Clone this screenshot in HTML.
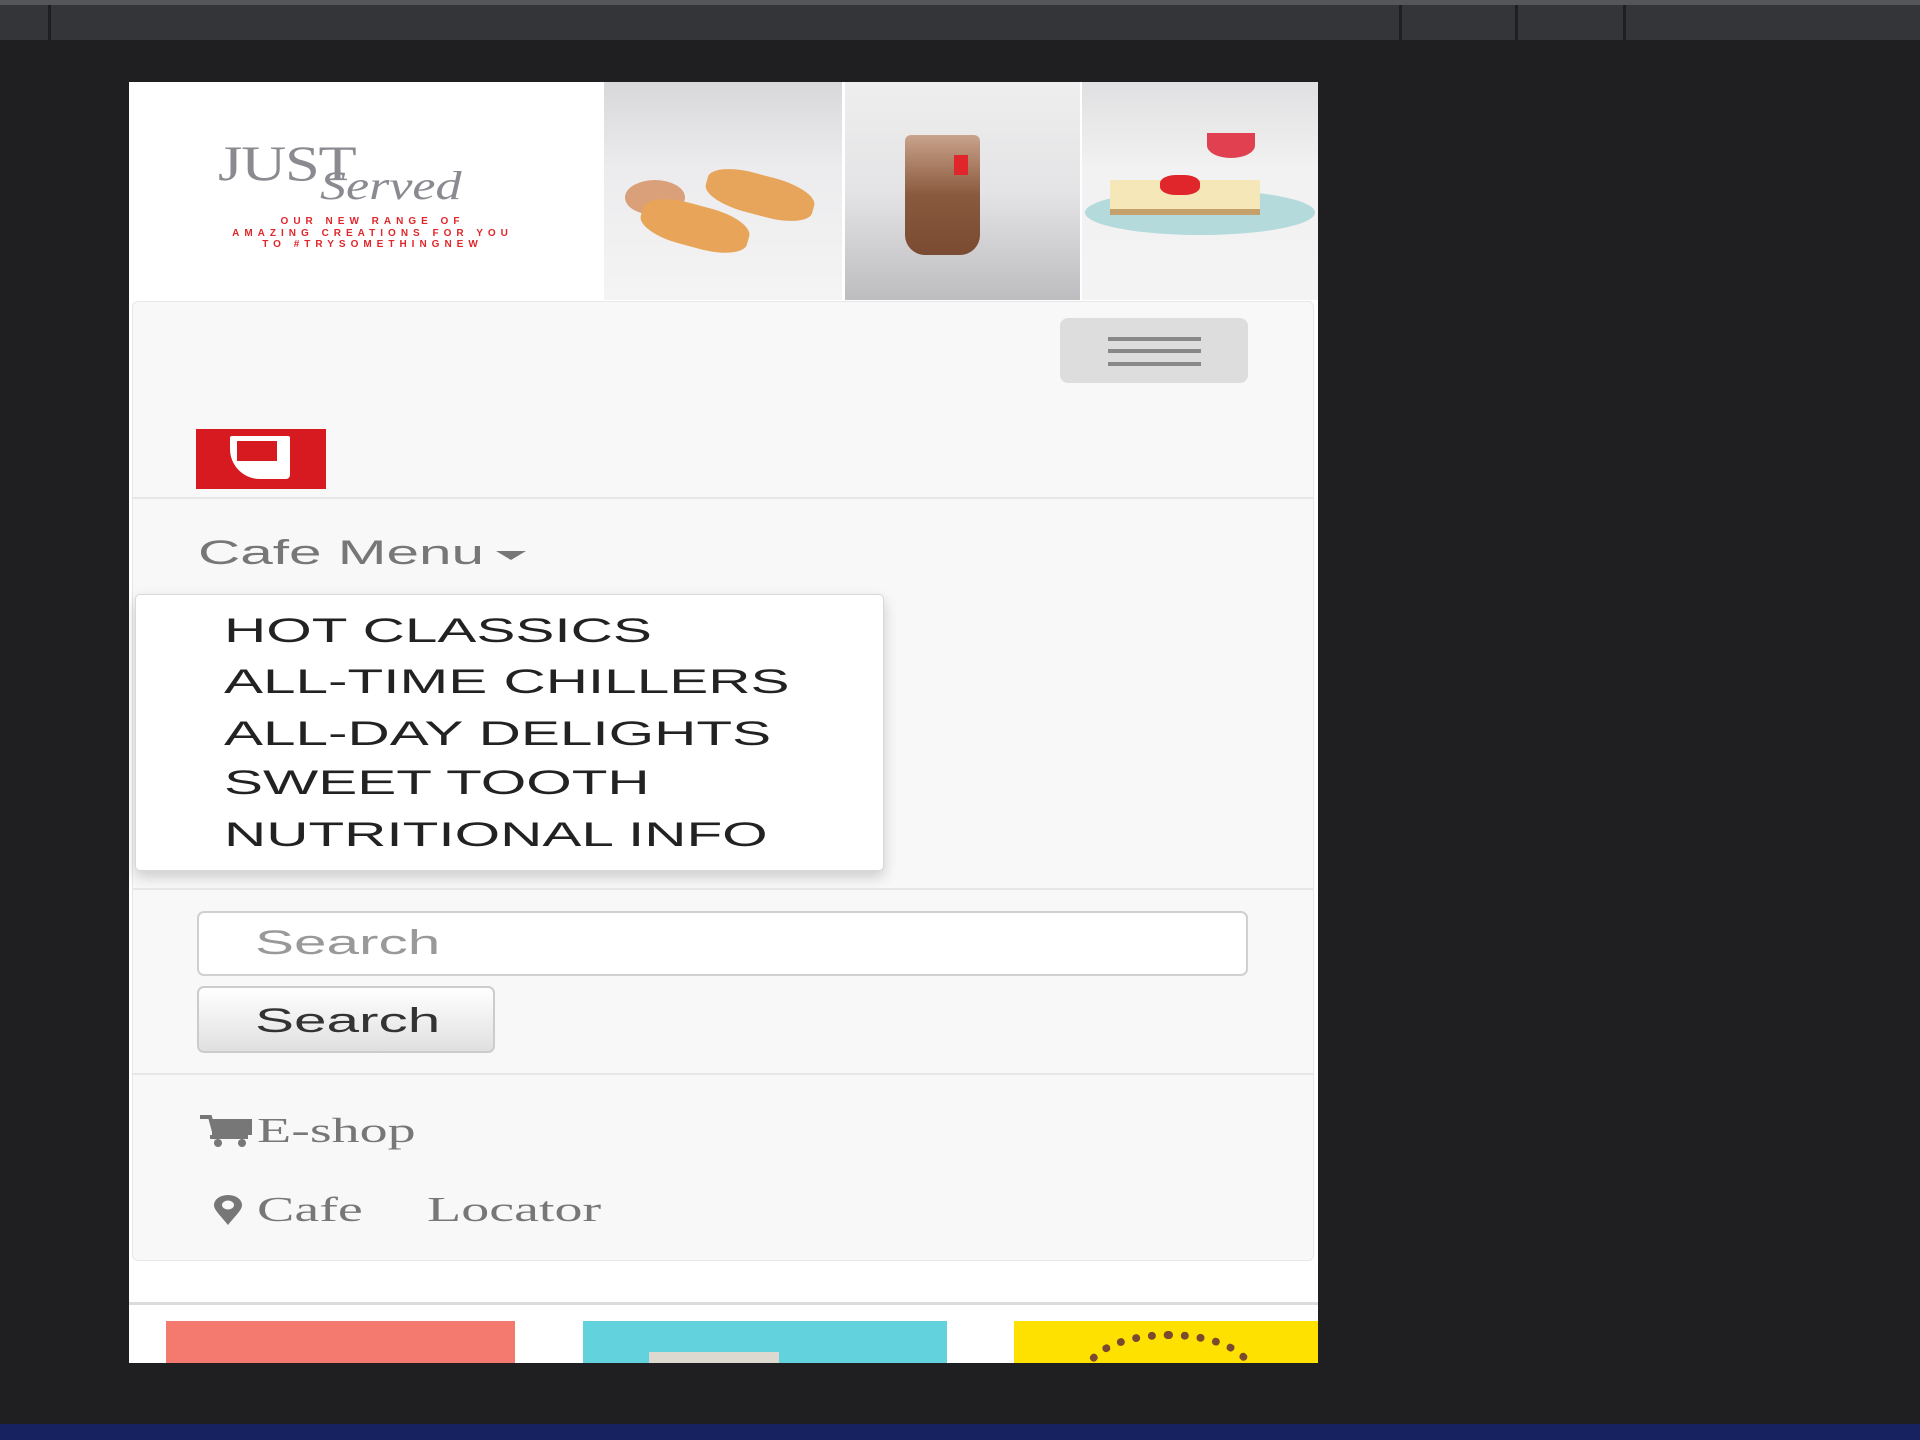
<!DOCTYPE html>
<html><head><meta charset="utf-8"><style>
*{margin:0;padding:0;box-sizing:border-box}
body{width:1920px;height:1440px;background:#1f1f21;position:relative;overflow:hidden;font-family:"Liberation Sans",Arial,sans-serif}
.a{position:absolute}
.sx{transform:scaleX(1.72);transform-origin:left bottom;white-space:nowrap;line-height:1}
.serif{font-family:"Liberation Serif",serif;transform:scaleX(1.6);transform-origin:left bottom;white-space:nowrap;line-height:1}
</style></head><body>
<div class="a" style="left:0;top:0;width:1920px;height:40px;background:#343538"></div>
<div class="a" style="left:0;top:0;width:1920px;height:5px;background:#55565a"></div>
<div class="a" style="left:48px;top:5px;width:3px;height:35px;background:#1f1f21"></div>
<div class="a" style="left:1399px;top:5px;width:3px;height:35px;background:#1f1f21"></div>
<div class="a" style="left:1515px;top:5px;width:3px;height:35px;background:#1f1f21"></div>
<div class="a" style="left:1623px;top:5px;width:3px;height:35px;background:#1f1f21"></div>
<div class="a" style="left:0;top:1424px;width:1920px;height:16px;background:#172260"></div>

<div class="a" style="left:129px;top:82px;width:1189px;height:1281px;background:#fff;overflow:hidden">
<div class="a" style="left:37px;top:1239px;width:349px;height:42px;background:#f47a70"></div>
<div class="a" style="left:454px;top:1239px;width:364px;height:42px;background:#62d3dc"></div>
<div class="a" style="left:520px;top:1270px;width:130px;height:11px;background:#ddd8d0"></div>
<div class="a" style="left:885px;top:1239px;width:304px;height:42px;background:#ffe100;overflow:hidden">
<div class="a" style="left:70px;top:10px;width:170px;height:80px;border-radius:50%;border:8px dotted #7a4a30"></div>
</div>
</div>

<div class="a" style="left:218px;top:134px;font-family:'Liberation Serif',serif;font-size:50px;color:#8a8a90;letter-spacing:-1px;transform:scaleX(1.25);transform-origin:left top">JUST</div>
<div class="a" style="left:320px;top:162px;font-family:'Liberation Serif',serif;font-style:italic;font-size:40px;color:#8a8a90;transform:scaleX(1.3);transform-origin:left top">Served</div>
<div class="a" style="left:180px;top:216px;width:385px;text-align:center;color:#e0262b;font-weight:bold;font-size:10px;letter-spacing:5px;line-height:11.5px">OUR NEW RANGE OF<br>AMAZING CREATIONS FOR YOU<br>TO #TRYSOMETHINGNEW</div>
<div class="a" style="left:604px;top:82px;width:238px;height:218px;background:linear-gradient(#d8d8da,#ececee 40%,#f4f4f4)"></div>
<div class="a" style="left:625px;top:180px;width:60px;height:35px;border-radius:50%;background:#d9a07a"></div>
<div class="a" style="left:705px;top:175px;width:110px;height:40px;border-radius:40%;background:#e7a55c;transform:rotate(15deg)"></div>
<div class="a" style="left:640px;top:205px;width:110px;height:42px;border-radius:40%;background:#e8a55a;transform:rotate(15deg)"></div>
<div class="a" style="left:845px;top:82px;width:235px;height:218px;background:linear-gradient(#eeeeee,#e4e4e6 50%,#bdbdc0)"></div>
<div class="a" style="left:905px;top:135px;width:75px;height:120px;border-radius:6px 6px 20px 20px;background:linear-gradient(#c9a38b,#8a5a3e 50%,#7a4a32)"></div>
<div class="a" style="left:954px;top:155px;width:14px;height:20px;background:#e0262b"></div>
<div class="a" style="left:1082px;top:82px;width:236px;height:218px;background:linear-gradient(#e0e0e2,#f2f2f2 40%,#f3f3f3)"></div>
<div class="a" style="left:1085px;top:190px;width:230px;height:45px;border-radius:50%;background:#b4dadb"></div>
<div class="a" style="left:1110px;top:180px;width:150px;height:35px;background:#f6e7b8;border-bottom:6px solid #c4a06a"></div>
<div class="a" style="left:1160px;top:175px;width:40px;height:20px;background:#e0262b;border-radius:40%"></div>
<div class="a" style="left:1207px;top:133px;width:48px;height:25px;border-radius:0 0 50% 50%;background:#e04050"></div>

<div class="a" style="left:132px;top:301px;width:1182px;height:960px;background:#f8f8f8;border:1px solid #e7e7e7;border-radius:6px"></div>
<div class="a" style="left:1060px;top:318px;width:188px;height:65px;background:#dddddd;border-radius:8px"></div>
<div class="a" style="left:1108px;top:337px;width:93px;height:4px;background:#888"></div>
<div class="a" style="left:1108px;top:349px;width:93px;height:4px;background:#888"></div>
<div class="a" style="left:1108px;top:362px;width:93px;height:4px;background:#888"></div>
<div class="a" style="left:196px;top:429px;width:130px;height:60px;background:#d71920"></div>
<div class="a" style="left:230px;top:436px;width:60px;height:43px;background:#fff;border-radius:2px 2px 4px 30px"></div>
<div class="a" style="left:237px;top:441px;width:40px;height:20px;background:#d71920"></div>
<div class="a" style="left:133px;top:497px;width:1180px;height:2px;background:#e7e7e7"></div>

<div class="a sx" style="left:198px;top:536px;font-size:34px;color:#777">Cafe Menu</div>
<div class="a" style="left:496px;top:551px;width:0;height:0;border-left:15px solid transparent;border-right:15px solid transparent;border-top:9px solid #777"></div>

<div class="a" style="left:135px;top:594px;width:749px;height:277px;background:#fff;border:1px solid #d8d8d8;border-radius:5px;box-shadow:0 6px 14px rgba(0,0,0,.18)"></div>
<div class="a sx" style="left:224px;top:614px;font-size:34px;color:#222">HOT CLASSICS</div>
<div class="a sx" style="left:224px;top:665px;font-size:34px;color:#222">ALL-TIME CHILLERS</div>
<div class="a sx" style="left:224px;top:717px;font-size:34px;color:#222">ALL-DAY DELIGHTS</div>
<div class="a sx" style="left:224px;top:766px;font-size:34px;color:#222">SWEET TOOTH</div>
<div class="a sx" style="left:224px;top:818px;font-size:34px;color:#222">NUTRITIONAL INFO</div>

<div class="a" style="left:133px;top:888px;width:1180px;height:2px;background:#e7e7e7"></div>
<div class="a" style="left:197px;top:911px;width:1051px;height:65px;background:#fff;border:2px solid #d0d0d0;border-radius:7px"></div>
<div class="a sx" style="left:255px;top:926px;font-size:34px;color:#999">Search</div>
<div class="a" style="left:197px;top:986px;width:298px;height:67px;background:linear-gradient(#fff,#e0e0e0);border:2px solid #ccc;border-radius:7px"></div>
<div class="a sx" style="left:255px;top:1004px;font-size:34px;color:#333">Search</div>
<div class="a" style="left:133px;top:1073px;width:1180px;height:2px;background:#e7e7e7"></div>

<svg class="a" style="left:198px;top:1115px" width="56" height="32" viewBox="0 0 56 32"><rect x="14" y="4" width="40" height="16" fill="#777"/><rect x="12" y="20" width="38" height="4" fill="#777"/><circle cx="20" cy="28" r="4" fill="#777"/><circle cx="44" cy="28" r="4" fill="#777"/><path d="M2 2h10l6 22" stroke="#777" stroke-width="4" fill="none"/></svg>
<div class="a serif" style="left:257px;top:1113px;font-size:35px;color:#777">E-shop</div>
<svg class="a" style="left:208px;top:1195px" width="40" height="30" viewBox="0 0 40 30"><path d="M20 30C12 20 6 15 6 10a14 10 0 0 1 28 0c0 5-6 10-14 20z" fill="#777"/><ellipse cx="20" cy="10" rx="6" ry="4.5" fill="#f8f8f8"/></svg>
<div class="a serif" style="left:257px;top:1192px;font-size:35px;color:#777">Cafe</div>
<div class="a serif" style="left:427px;top:1192px;font-size:35px;color:#777">Locator</div>

<div class="a" style="left:129px;top:1302px;width:1189px;height:3px;background:#dcdcdc"></div>
</body></html>
